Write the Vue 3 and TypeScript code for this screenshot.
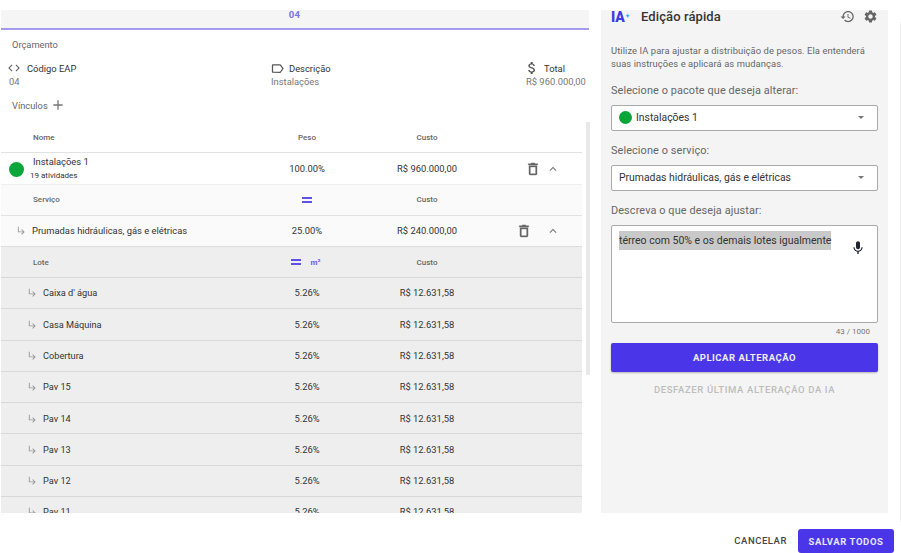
<script setup lang="ts">
const lots: string[] = ['Caixa d\' água', 'Casa Máquina', 'Cobertura', 'Pav 15', 'Pav 14', 'Pav 13', 'Pav 12', 'Pav 11']
const icons = {
  trash: 'M6 19c0 1.1.9 2 2 2h8c1.1 0 2-.9 2-2V7H6v12zM8 9h8v10H8V9zm7.5-5l-1-1h-5l-1 1H5v2h14V4z',
  up: 'M12 8l-6 6 1.41 1.41L12 10.83l4.59 4.58L18 14z',
  sub: 'M19 15l-6 6-1.42-1.42L15.17 16H4V4h2v10h9.17l-3.59-3.58L13 9l6 6z',
  code: 'M9.4 16.6L4.8 12l4.6-4.6L8 6l-6 6 6 6 1.4-1.4zm5.2 0l4.6-4.6-4.6-4.6L16 6l6 6-6 6-1.4-1.4z',
  label: 'M17.63 5.84C17.27 5.33 16.67 5 16 5L5 5.01C3.9 5.01 3 5.9 3 7v10c0 1.1.9 1.99 2 1.99L16 19c.67 0 1.27-.33 1.63-.84L22 12l-4.37-6.16zM16 17H5V7h11l3.55 5L16 17z',
  money: 'M11.8 10.9c-2.27-.59-3-1.2-3-2.15 0-1.09 1.01-1.85 2.7-1.85 1.78 0 2.44.85 2.5 2.1h2.21c-.07-1.72-1.12-3.3-3.21-3.81V3h-3v2.16c-1.94.42-3.5 1.68-3.5 3.61 0 2.31 1.91 3.46 4.7 4.13 2.5.6 3 1.48 3 2.41 0 .69-.49 1.79-2.7 1.79-2.06 0-2.87-.92-2.98-2.1h-2.2c.12 2.19 1.76 3.42 3.68 3.83V21h3v-2.15c1.95-.37 3.5-1.5 3.5-3.55 0-2.84-2.43-3.81-4.7-4.4z',
  add: 'M19 13h-6v6h-2v-6H5v-2h6V5h2v6h6v2z',
  history: 'M13 3c-4.97 0-9 4.03-9 9H1l3.89 3.89.07.14L9 12H6c0-3.87 3.13-7 7-7s7 3.13 7 7-3.13 7-7 7c-1.93 0-3.68-.79-4.94-2.06l-1.42 1.42C8.27 19.99 10.51 21 13 21c4.97 0 9-4.03 9-9s-4.03-9-9-9zm-1 5v5l4.28 2.54.72-1.21-3.5-2.08V8H12z',
  gear: 'M19.14 12.94c.04-.3.06-.61.06-.94 0-.32-.02-.64-.07-.94l2.03-1.58c.18-.14.23-.41.12-.61l-1.92-3.32c-.12-.22-.37-.29-.59-.22l-2.39.96c-.5-.38-1.03-.7-1.62-.94l-.36-2.54c-.04-.24-.24-.41-.48-.41h-3.84c-.24 0-.43.17-.47.41l-.36 2.54c-.59.24-1.13.57-1.62.94l-2.39-.96c-.22-.08-.47 0-.59.22L2.74 8.87c-.12.21-.08.47.12.61l2.03 1.58c-.05.3-.09.63-.09.94s.02.64.07.94l-2.03 1.58c-.18.14-.23.41-.12.61l1.92 3.32c.12.22.37.29.59.22l2.39-.96c.5.38 1.03.7 1.62.94l.36 2.54c.05.24.24.41.48.41h3.84c.24 0 .44-.17.47-.41l.36-2.54c.59-.24 1.13-.56 1.62-.94l2.39.96c.22.08.47 0 .59-.22l1.92-3.32c.12-.22.07-.47-.12-.61l-2.01-1.58zM12 15.6c-1.98 0-3.6-1.62-3.6-3.6s1.62-3.6 3.6-3.6 3.6 1.62 3.6 3.6-1.62 3.6-3.6 3.6z',
  mic: 'M12 14c1.66 0 3-1.34 3-3V5c0-1.66-1.34-3-3-3S9 3.34 9 5v6c0 1.66 1.34 3 3 3zm5.3-3c0 3-2.54 5.1-5.3 5.1S6.7 14 6.7 11H5c0 3.41 2.72 6.23 6 6.72V21h2v-3.28c3.28-.48 6-3.3 6-6.72h-1.7z'
}
</script>

<template>
  <div class="page">
    <div class="main">
      <section class="left">
        <div class="top-band"><span class="band-code">04</span></div>
        <div class="summary">
          <div class="section-title">Orçamento</div>
          <div class="facts">
            <div class="fact fact-code">
              <div class="fact-head"><svg class="ic-code" viewBox="0 0 24 24"><path :d="icons.code" /></svg><span>Código EAP</span></div>
              <div class="fact-value">04</div>
            </div>
            <div class="fact fact-desc">
              <div class="fact-head"><svg class="ic-label" viewBox="0 0 24 24"><path :d="icons.label" /></svg><span>Descrição</span></div>
              <div class="fact-value">Instalações</div>
            </div>
            <div class="fact fact-total">
              <div class="fact-head"><svg class="ic-money" viewBox="0 0 24 24"><path :d="icons.money" /></svg><span>Total</span></div>
              <div class="fact-value">R$ 960.000,00</div>
            </div>
          </div>
          <div class="section-title links">Vínculos <svg class="ic-add" viewBox="0 0 24 24"><path :d="icons.add" /></svg></div>
        </div>

        <div class="table-wrap">
          <div class="table">
            <div class="row head-row">
              <div class="name-cell head-name">Nome</div>
              <div class="center">Peso</div>
              <div class="center">Custo</div>
            </div>
            <div class="row pack-row">
              <div class="name-cell pack-name">
                <span class="dot"></span>
                <div>
                  <div class="pack-title">Instalações 1</div>
                  <div class="pack-sub">19 atividades</div>
                </div>
              </div>
              <div class="center">100.00%</div>
              <div class="center">R$ 960.000,00</div>
              <div class="actions actions-first">
                <svg class="ic-trash" viewBox="0 0 24 24"><path :d="icons.trash" /></svg>
                <svg class="ic-up" viewBox="0 0 24 24"><path :d="icons.up" /></svg>
              </div>
            </div>
            <div class="row service-head">
              <div class="name-cell head-name">Serviço</div>
              <div class="center"><span class="equal"></span></div>
              <div class="center">Custo</div>
            </div>
            <div class="row service-row">
              <div class="name-cell service-name">
                <svg class="ic-sub" viewBox="0 0 24 24"><path :d="icons.sub" /></svg>
                <span>Prumadas hidráulicas, gás e elétricas</span>
              </div>
              <div class="center">25.00%</div>
              <div class="center">R$ 240.000,00</div>
              <div class="actions actions-second">
                <svg class="ic-trash" viewBox="0 0 24 24"><path :d="icons.trash" /></svg>
                <svg class="ic-up" viewBox="0 0 24 24"><path :d="icons.up" /></svg>
              </div>
            </div>
            <div class="row lot-head">
              <div class="name-cell head-name">Lote</div>
              <div class="center lot-peso"><span class="equal"></span><span class="unit">m²</span></div>
              <div class="center">Custo</div>
            </div>
            <div v-for="lot in lots" :key="lot" class="row lot-row">
              <div class="name-cell lot-name">
                <svg class="ic-sub" viewBox="0 0 24 24"><path :d="icons.sub" /></svg>
                <span>{{ lot }}</span>
              </div>
              <div class="center">5.26%</div>
              <div class="center">R$ 12.631,58</div>
            </div>
          </div>
          <div class="scrollbar"><div class="thumb"></div></div>
        </div>
      </section>

      <aside class="panel">
        <div class="panel-head">
          <span class="ia-logo">IA<sup>✦</sup></span>
          <span class="panel-title">Edição rápida</span>
          <svg class="ic-history" viewBox="0 0 24 24"><path :d="icons.history" /></svg>
          <svg class="ic-gear" viewBox="0 0 24 24"><path :d="icons.gear" /></svg>
        </div>
        <p class="intro">Utilize IA para ajustar a distribuição de pesos. Ela entenderá suas instruções e aplicará as mudanças.</p>
        <div class="field-label first-label">Selecione o pacote que deseja alterar:</div>
        <div class="select">
          <span class="dot small"></span>
          <span class="select-text">Instalações 1</span>
          <span class="caret"></span>
        </div>
        <div class="field-label">Selecione o serviço:</div>
        <div class="select">
          <span class="select-text">Prumadas hidráulicas, gás e elétricas</span>
          <span class="caret"></span>
        </div>
        <div class="field-label">Descreva o que deseja ajustar:</div>
        <div class="textarea">
          <span class="selected">térreo com 50% e os demais lotes igualmente</span>
          <svg class="ic-mic" viewBox="0 0 24 24"><path :d="icons.mic" /></svg>
        </div>
        <div class="counter">43 / 1000</div>
        <button class="apply" type="button">APLICAR ALTERAÇÃO</button>
        <div class="undo">DESFAZER ÚLTIMA ALTERAÇÃO DA IA</div>
      </aside>
    </div>

    <footer class="footer">
      <span class="cancel">CANCELAR</span>
      <button class="save" type="button">SALVAR TODOS</button>
    </footer>
    <div class="edge"></div>
  </div>
</template>

<style>
html, body { margin: 0; background: #fff; overflow: hidden; }
</style>

<style scoped>
.page {
  position: relative;
  width: 901px;
  height: 553px;
  padding-top: 10px;
  box-sizing: border-box;
  font-family: Roboto, "Liberation Sans", sans-serif;
  color: #333;
  overflow: hidden;
  background: #fff;
}
.edge {
  position: absolute;
  left: 900px;
  top: 22px;
  width: 1px;
  height: 500px;
  background: #f0f0f0;
}
.main { display: flex; height: 503px; padding-left: 1px; }
.left { width: 589px; display: flex; flex-direction: column; overflow: hidden; flex: none; }
.top-band {
  height: 18px;
  background: #f5f5f5;
  border-bottom: 2px solid #a49bf0;
  margin-right: 1px;
}
.band-code { display: block; width: 587px; text-align: center; font-size: 9.5px; font-weight: 700; line-height: 9px; color: #7b70ec; letter-spacing: .2px; }
.summary { height: 92px; flex: none; }
.section-title { font-size: 9.3px; color: #666; padding: 9px 0 0 11px; line-height: 12px; }
.facts { display: flex; margin-top: 10px; height: 29px; }
.fact { font-size: 9.4px; line-height: 13px; position: relative; white-space: nowrap; }
.fact-head { display: flex; align-items: center; color: #333; height: 14px; }
.fact-value { color: #777; line-height: 14px; }
.fact-code { width: 270px; padding-left: 8px; box-sizing: border-box; }
.fact-desc { width: 255px; }
.fact-total { width: 60px; }
.ic-code { width: 14px; height: 14px; fill: #666; margin: 0 6px 0 -2px; }
.ic-label { width: 15px; height: 15px; fill: #555; margin: 0 4px 0 -1px; }
.ic-money { width: 16px; height: 16px; fill: #555; margin: 0 4px 0 -2px; }
.links { display: flex; align-items: center; gap: 2px; padding-top: 8px; }
.ic-add { width: 16px; height: 16px; fill: #777; margin-top: -1px; }

.table-wrap { position: relative; flex: 1; overflow: hidden; }
.table { width: 581px; }
.scrollbar { position: absolute; left: 585px; top: 0; width: 4px; height: 100%; }
.thumb { height: 253px; background: #e9e9e9; }
.row {
  display: grid;
  grid-template-columns: 246px 120px 120px 95px;
  align-items: center;
  box-sizing: border-box;
  font-size: 9.4px;
  color: #333;
}
.center { text-align: center; }
.head-row { height: 31px; font-size: 8px; font-weight: 500; color: #666; border-bottom: 1px solid #e2e2e2; }
.head-name { padding-left: 32px; }
.pack-row { height: 31px; background: #fff; }
.pack-name { display: flex; align-items: center; padding-left: 8px; }
.dot { width: 15px; height: 15px; border-radius: 50%; background: #0aa63a; flex: none; margin-right: 9px; margin-top: 2px; }
.pack-title { font-size: 9.4px; line-height: 12px; }
.pack-sub { font-size: 8px; line-height: 12px; margin-left: -3px; margin-top: 2px; }
.actions { display: flex; align-items: center; }
.actions-first { padding-left: 38px; }
.actions-second { padding-left: 29px; }
.actions-first .ic-up { margin-left: 5px; }
.actions-second .ic-up { margin-left: 14px; }
.ic-trash { width: 16px; height: 16px; fill: #666; stroke: #666; stroke-width: .6; }
.ic-up { width: 14px; height: 14px; fill: #777; }
.service-head {
  height: 32px;
  background: #fafafa;
  font-size: 8px;
  font-weight: 500;
  color: #666;
  border-top: 1px solid #eee;
  border-bottom: 1px solid #e2e2e2;
  padding-bottom: 1px;
}
.service-row { height: 31px; background: #fafafa; border-bottom: 1px solid #ddd; padding-bottom: 1px; }
.service-name { display: flex; align-items: center; padding-left: 15px; }
.ic-sub { width: 11px; height: 11px; fill: #999; flex: none; margin-right: 5px; }
.lot-head { height: 31px; background: #eee; font-size: 8px; font-weight: 500; color: #666; border-bottom: 1px solid #d8d8d8; }
.lot-row { height: 31.3px; background: #eee; border-bottom: 1px solid #d8d8d8; padding-bottom: .5px; }
.lot-name { display: flex; align-items: center; padding-left: 26px; font-size: 9.2px; }
.equal {
  display: inline-block;
  vertical-align: middle;
  width: 10px;
  height: 2px;
  border-top: 2px solid #5f50ee;
  border-bottom: 2px solid #5f50ee;
  box-sizing: content-box;
}
.lot-peso { display: flex; justify-content: center; align-items: center; gap: 10px; padding-right: 3px; }
.unit { color: #6a5cf0; font-size: 8px; font-weight: 700; }

.panel {
  width: 287px;
  margin-left: 11px;
  flex: none;
  background: #f4f4f4;
  box-sizing: border-box;
  padding: 0 10px;
}
.panel-head { display: flex; align-items: center; height: 13px; }
.ia-logo { width: 30px; font-size: 14px; line-height: 14px; font-weight: 900; color: #3c3be0; white-space: nowrap; margin-top: 1px; }
.ia-logo sup { font-size: 6px; vertical-align: 4px; line-height: 0; color: #3aa0ee; }
.panel-title { font-size: 13px; font-weight: 500; color: #333; letter-spacing: .1px; flex: 1; }
.ic-history { width: 15px; height: 15px; fill: #666; margin-right: 8px; }
.ic-gear { width: 15px; height: 15px; fill: #666; }
.intro { margin: 21px 0 0; font-size: 9.4px; line-height: 13px; color: #666; letter-spacing: .08px; }
.field-label { font-size: 10.9px; line-height: 12px; color: #666; margin: 14px 0 8px; letter-spacing: .1px; }
.first-label { margin-top: 15px; }
.select {
  display: flex;
  align-items: center;
  height: 26px;
  box-sizing: border-box;
  background: #fff;
  border: 1px solid #aaa;
  border-radius: 2px;
  padding: 0 7px 1px;
  font-size: 10.4px;
  color: #333;
}
.dot.small { width: 13px; height: 13px; margin: 0 4px 0 0; }
.select-text { flex: 1; }
.caret {
  width: 0; height: 0;
  border-left: 3px solid transparent;
  border-right: 3px solid transparent;
  border-top: 3px solid #777;
  margin-right: 6px;
}
.textarea {
  position: relative;
  height: 98px;
  box-sizing: border-box;
  background: #fff;
  border: 1px solid #aaa;
  border-radius: 2px;
  padding: 5px 7px;
  font-size: 10.5px;
  line-height: 19px;
  color: #333;
}
.selected { display: inline-block; background: #c9c9c9; }
.ic-mic { position: absolute; right: 11px; top: 14px; width: 16px; height: 16px; fill: #1f2230; }
.counter { font-size: 8px; color: #777; text-align: right; padding-right: 8px; line-height: 12px; margin-top: 3px; }
.apply {
  display: block;
  width: 100%;
  height: 29px;
  margin-top: 5px;
  border: none;
  border-radius: 2px;
  background: #4a35e8;
  color: #eee;
  font: 700 9.5px Roboto, "Liberation Sans", sans-serif;
  letter-spacing: .5px;
  box-shadow: 0 1px 2px rgba(0,0,0,.25);
}
.undo { text-align: center; font-size: 9.5px; font-weight: 500; color: #bdbdbd; margin-top: 12px; letter-spacing: .62px; }

.footer { height: 40px; display: flex; align-items: flex-end; justify-content: flex-end; padding-right: 7px; box-sizing: border-box; }
.cancel { font-size: 9.5px; font-weight: 500; line-height: 24px; color: #444; letter-spacing: .55px; margin-right: 11px; }
.save {
  width: 96px;
  height: 24px;
  border: none;
  border-radius: 3px;
  background: #4a35e8;
  color: #e6e6ff;
  font: 700 9.5px Roboto, "Liberation Sans", sans-serif;
  letter-spacing: .6px;
}
</style>
